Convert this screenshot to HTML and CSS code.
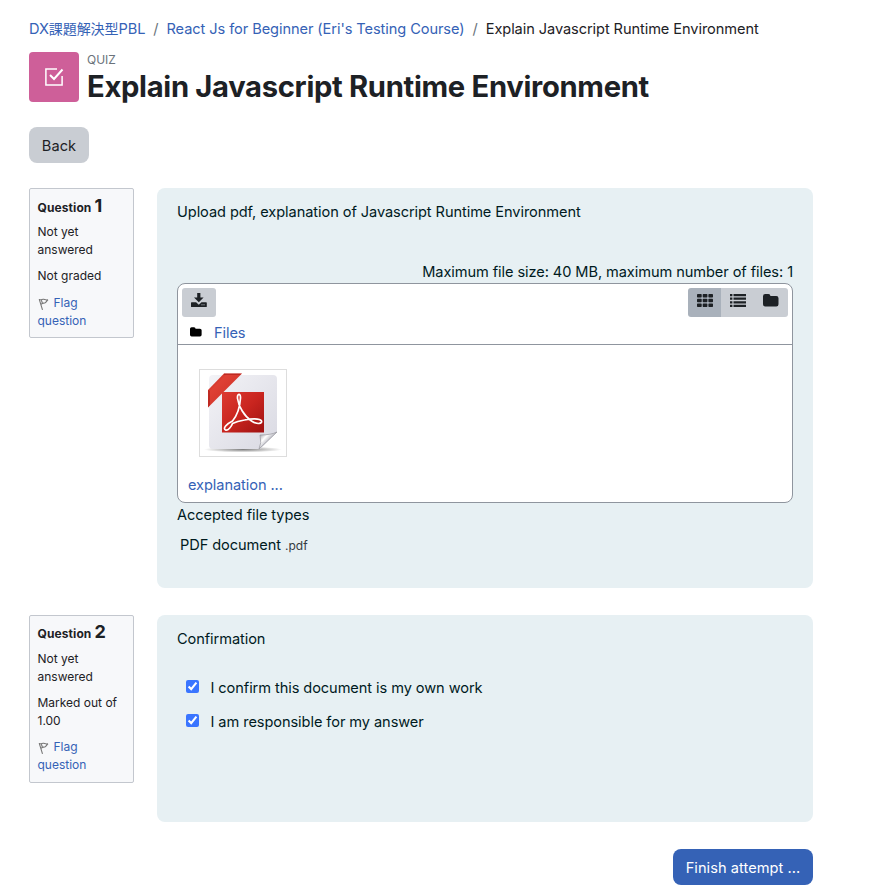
FILE: index.html
```html
<!DOCTYPE html>
<html lang="en">
<head>
<meta charset="utf-8">
<title>Explain Javascript Runtime Environment</title>
<link rel="stylesheet" href="styles.css">
</head>
<body>
<svg class="defs" width="0" height="0" aria-hidden="true">
  <symbol id="flag" viewBox="0 0 12 14">
    <path d="M1.200 2.200 4.500 12.800M1.200 2.500c2 .9 3-.6 4.500-.2 1.500.4 2.500 1 4.300.5C8.500 3.800 8.200 5.200 7.200 5.800c-1.300.7-2.600-.1-4.200 1.500M3.300 3l1.400 4" fill="none" stroke="#777" stroke-width="1.100"/>
  </symbol>
  <symbol id="folder" viewBox="0 0 16 13">
    <path d="M2.200 0h3.200q2 0 2 2h5.900q2.200 0 2.200 2.200v6q0 2.200-2.200 2.200H2.200Q0 12.400 0 10.200v-8Q0 0 2.200 0z" fill="currentColor"/>
  </symbol>
</svg>
<main class="page">
  <nav class="crumbs"><a href="#">DX<span class="cjk">課題解決型</span>PBL</a><i>/</i><a href="#">React Js for Beginner (Eri's Testing Course)</a><i>/</i><span>Explain Javascript Runtime Environment</span></nav>
  <header class="head">
    <div class="activity-icon">
      <svg width="20" height="20" viewBox="0 0 20 20" fill="none" stroke="#fff"><path d="M13 1.900H1.900v16.200h16.200V9" stroke-width="1.500"/><path d="M6 8l4 4L18.500 2.500" stroke-width="2"/></svg>
    </div>
    <div class="head-text"><div class="kind">QUIZ</div><h1>Explain Javascript Runtime Environment</h1></div>
  </header>
  <button class="btn back">Back</button>

  <section class="question first">
    <aside class="info">
      <h3>Question <b>1</b></h3>
      <p>Not yet answered</p>
      <p>Not graded</p>
      <p class="flagline"><a href="#"><svg width="12" height="14"><use href="#flag"/></svg>Flag question</a></p>
    </aside>
    <div class="content">
      <p class="prompt">Upload pdf, explanation of Javascript Runtime Environment</p>
      <p class="limits">Maximum file size: 40 MB, maximum number of files: 1</p>
      <div class="manager">
        <div class="toolbar">
          <button class="tool" aria-label="Download">
            <svg width="16" height="15" viewBox="0 0 16 15"><path d="M6.200 0h3.200v4.500h3.200L7.800 9.300 3 4.500h3.200z" fill="#1d2125"/><path d="M.6 9.300h4.500l2.700 2.400 2.700-2.400h4.700q.6 0 .6.600v3.500q0 .6-.6.600H.6q-.6 0-.6-.6V9.900q0-.6.600-.6z" fill="#1d2125"/><path d="M10.500 11.800h1m1 0h1" stroke="#c9cdd3"/></svg>
          </button>
          <div class="views">
            <button class="view on" aria-label="Icons"><svg width="16" height="13" viewBox="0 0 16 13" fill="#1d2125"><g id="r"><rect width="4.700" height="3.500" rx=".7"/><rect x="5.700" width="4.700" height="3.500" rx=".7"/><rect x="11.400" width="4.600" height="3.500" rx=".7"/></g><use href="#r" y="4.700"/><use href="#r" y="9.400"/></svg></button>
            <button class="view" aria-label="List"><svg width="16" height="13" viewBox="0 0 16 13" fill="#1d2125"><path d="M0 0h2.400v2.200H0zM0 3.600h2.400v2.200H0zM0 7.200h2.400v2.200H0zM0 10.800h2.400V13H0zM3.500 0H16v2.200H3.500zM3.500 3.600H16v2.200H3.500zM3.500 7.200H16v2.200H3.500zM3.500 10.800H16V13H3.500z"/></svg></button>
            <button class="view" aria-label="Tree"><svg width="16" height="13"><use href="#folder"/></svg></button>
          </div>
        </div>
        <div class="path"><svg width="12" height="10"><use href="#folder"/></svg><a href="#">Files</a></div>
        <div class="files">
          <div class="thumb">
            <svg width="86" height="86" viewBox="0 0 86 86">
              <defs>
                <linearGradient id="paper" x2="1" y2="1"><stop stop-color="#f3f3f7"/><stop offset="1" stop-color="#d9d9e2"/></linearGradient>
                <linearGradient id="red" x2="1" y2="1"><stop stop-color="#dc3a31"/><stop offset=".5" stop-color="#c9251f"/><stop offset="1" stop-color="#9e1212"/></linearGradient>
                <linearGradient id="curl" x1=".1" y1=".1" x2=".8" y2=".7"><stop stop-color="#a5a5ad"/><stop offset=".35" stop-color="#fff"/><stop offset=".6" stop-color="#c9c9d0"/><stop offset="1" stop-color="#8b8b93"/></linearGradient>
                <radialGradient id="shade"><stop stop-color="#555" stop-opacity=".75"/><stop offset="1" stop-color="#555" stop-opacity="0"/></radialGradient>
                <linearGradient id="ribbon" y2="1"><stop stop-color="#a81813"/><stop offset=".3" stop-color="#df4034"/><stop offset="1" stop-color="#c52a22"/></linearGradient>
              </defs>
              <ellipse cx="43" cy="79.500" rx="39" ry="3" fill="url(#shade)"/>
              <path d="M13 5h60q4 0 4 4v53L60 79H13q-4 0-4-4V9q0-4 4-4z" fill="url(#paper)"/>
              <path d="M77 62q-6 3-17 3 2 8-1 14z" fill="url(#curl)" stroke="#96969e" stroke-width=".7"/>
              <path d="M24 3.500h18L8 37.500V20z" fill="url(#ribbon)"/>
              <path d="M24 3.500h18l-2 1.500H24zM8 37.500V20l2 1v14z" fill="#a11612" opacity=".5"/>
              <rect x="22" y="22" width="42" height="40.500" fill="url(#red)"/>
              <path d="M25.500 60c-3-1.500 1-6 7-9 5-6 7.500-15 8-23 .2-5-3.500-5-3 .5 1 8 7 18 14 22.500 6 4 11 2.500 10 0-1.500-3-11-2.300-17-1-6 1-9 2-12 3.500-1 3-4.500 7.500-7 6.500z" fill="none" stroke="#fff" stroke-width="1.700" stroke-linejoin="round"/>
            </svg>
          </div>
          <a href="#">explanation ...</a>
        </div>
      </div>
      <p class="accepted">Accepted file types</p>
      <p class="type">PDF document <small>.pdf</small></p>
    </div>
  </section>

  <section class="question second">
    <aside class="info">
      <h3>Question <b>2</b></h3>
      <p>Not yet answered</p>
      <p>Marked out of 1.00</p>
      <p class="flagline"><a href="#"><svg width="12" height="14"><use href="#flag"/></svg>Flag question</a></p>
    </aside>
    <div class="content">
      <p class="prompt">Confirmation</p>
      <label class="check"><input type="checkbox" checked><span>I confirm this document is my own work</span></label>
      <label class="check"><input type="checkbox" checked><span>I am responsible for my answer</span></label>
    </div>
  </section>
  <div class="actions"><button class="btn finish">Finish attempt ...</button></div>
</main>
</body>
</html>
```
FILE: styles.css
```css
* { box-sizing: border-box; }
body { margin: 0; background: #fff; color: #1d2125; font: 14.600px/22px Inter, "Noto Sans CJK JP", sans-serif; letter-spacing: -.08px; overflow: hidden; }
p, h1, h3 { margin: 0; }
a { color: #3562b6; text-decoration: none; }
button { border: 0; font: inherit; letter-spacing: inherit; color: inherit; padding: 0; }
svg { display: block; }
.defs { position: absolute; }
.page { width: 784px; margin-left: 29px; padding-top: 18px; }
.crumbs { height: 22px; white-space: nowrap; display: flex; }
.crumbs i { font-style: normal; color: #6a737b; padding: 0 8px; }
.cjk { font-size: 14px; line-height: 1; }
.head { display: flex; gap: 8px; margin-top: 12px; height: 50px; }
.activity-icon { width: 50px; height: 50px; border-radius: 4px; background: #ce5f99; display: flex; align-items: center; justify-content: center; }
.head-text { white-space: nowrap; }
.kind { font-size: 12px; line-height: 16px; color: #6a737b; letter-spacing: 0; }
h1 { font-size: 29.200px; line-height: 38px; font-weight: 700; letter-spacing: -.32px; }
.btn { height: 36px; border-radius: 8px; display: block; padding-top: 2px; letter-spacing: .05px; }
.back { width: 60px; margin-top: 25px; background: #c9cdd3; }
.question { display: flex; gap: 23px; align-items: flex-start; }
.first { margin-top: 25px; }
.second { margin-top: 27px; }
.info { width: 105px; border: 1px solid #c3c7ce; border-radius: 2px; background: #f7f8fa; padding: 7px 7.500px; font-size: 12px; line-height: 18px; letter-spacing: 0; }
.first .info { height: 150px; }
.second .info { height: 168px; padding-top: 6px; }
.info h3 { font-size: 12px; line-height: 20px; font-weight: 700; height: 20px; white-space: nowrap; letter-spacing: .1px; }
.info h3 b { font-size: 18px; font-weight: 700; }
.info p { margin-top: 8px; }
.info h3 + p { margin-top: 7px; }
.second .info h3 + p { margin-top: 8px; }
.info .flagline { margin-top: 9px; width: 60px; }
.second .info .flagline { margin-top: 8px; }
.flagline svg { display: inline-block; vertical-align: -4px; margin-right: 4px; }
.content { flex: 1; background: #e7f0f3; border-radius: 8px; padding: 13px 20px; color: #001a1e; }
.first .content { height: 400px; }
.second .content { height: 207px; }
.limits { text-align: right; margin-top: 38px; }
.manager { height: 220px; border: 1px solid #8f959e; border-radius: 8px; background: #fff; }
.toolbar { display: flex; justify-content: space-between; padding: 4px; height: 37px; }
.tool, .view { display: flex; justify-content: center; height: 29px; padding-top: 6px; background: #c9cdd3; }
.tool { width: 34px; border-radius: 3px; padding-top: 5px; }
.views { display: flex; border-radius: 3px; overflow: hidden; color: #1d2125; }
.view { width: 33.500px; }
.view.on { background: #a9b1bb; padding-left: 1px; }
.path { display: flex; align-items: center; gap: 12px; height: 24px; padding-left: 12px; border-bottom: 1px solid #8f959e; }
.path svg { color: #000; margin-top: -1px; }
.files { padding: 24px 10px 0; }
.thumb { width: 88px; height: 88px; border: 1px solid #ddd; margin: 0 0 17px 11px; }
.accepted { margin-top: 1px; }
.type { margin: 8px 0 0 3px; }
.type small { font-size: 12px; color: #343a40; letter-spacing: 0; }
.check { display: flex; height: 22px; margin-top: 12px; }
.prompt + .check { margin-top: 27px; }
.check input { width: 13px; height: 13px; margin: 3px 12px 0 8.500px; accent-color: #3a75ff; }
.actions { display: flex; justify-content: flex-end; margin-top: 27px; }
.finish { width: 140px; background: #3562b6; color: #fff; }
```
